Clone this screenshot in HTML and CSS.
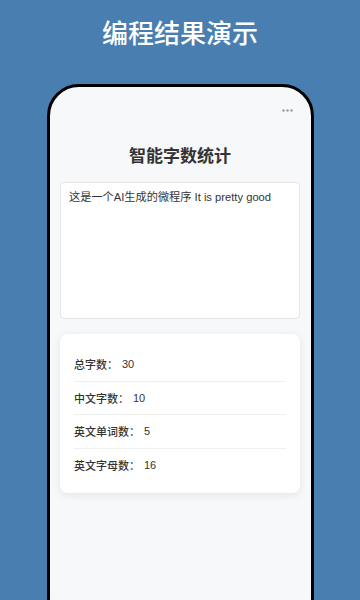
FILE: index.html
```html
<!DOCTYPE html>
<html lang="zh-CN">
<head>
  <meta charset="UTF-8">
  <meta name="viewport" content="width=device-width, initial-scale=1.0">
  <title>编程结果演示</title>
  <link rel="stylesheet" href="styles.css">
</head>
<body>
  <h1 class="banner">编程结果演示</h1>
  <div class="phone">
    <!-- Mini program nav bar -->
    <div class="nav">
      <svg class="dots" width="11" height="3" viewBox="0 0 11 3">
        <circle cx="1.5" cy="1.5" r="1.3" fill="#a0a0a0"/>
        <circle cx="5.5" cy="1.5" r="1.3" fill="#a0a0a0"/>
        <circle cx="9.5" cy="1.5" r="1.3" fill="#a0a0a0"/>
      </svg>
    </div>
    <h2 class="title">智能字数统计</h2>
    <textarea class="input">这是一个AI生成的微程序 It is pretty good</textarea>
    <!-- Result card -->
    <div class="card">
      <div class="row"><span class="label">总字数：</span><span class="value">30</span></div>
      <div class="row"><span class="label">中文字数：</span><span class="value">10</span></div>
      <div class="row"><span class="label">英文单词数：</span><span class="value">5</span></div>
      <div class="row"><span class="label">英文字母数：</span><span class="value">16</span></div>
    </div>
  </div>
</body>
</html>
```

FILE: styles.css
```css
html, body {
  height: 600px;
  overflow: hidden;
}
body {
  margin: 0;
  background-color: #487eb0;
  font-family: "Liberation Sans", "Noto Sans CJK SC", sans-serif;
}
.banner {
  margin: 0;
  padding-top: 17px;
  font-size: 26px;
  line-height: 30px;
  font-weight: 500;
  color: #fff;
  text-align: center;
  font-family: "Noto Sans CJK SC", sans-serif;
}
.phone {
  width: 241px;
  height: 540px;
  margin: 37px auto 0;
  padding: 0 10px;
  border: 3px solid #000;
  border-radius: 32px;
  background-color: #f7f8fa;
}
.nav {
  height: 46px;
  display: flex;
  justify-content: flex-end;
  align-items: center;
  padding-right: 8px;
}
.dots {
  display: block;
}
.title {
  margin: 10px 0 15px;
  font-size: 17px;
  line-height: 24px;
  font-weight: 600;
  color: #333;
  text-align: center;
  font-family: "Noto Sans CJK SC", sans-serif;
}
.input {
  display: block;
  box-sizing: border-box;
  width: 240px;
  height: 137px;
  margin: 0 auto 15px;
  padding: 6px 8px;
  border: 1px solid #e6e6e8;
  border-radius: 4px;
  background-color: #fff;
  color: #333;
  font-family: "Liberation Sans", "Noto Sans CJK SC", sans-serif;
  font-size: 11.2px;
  line-height: 16px;
  resize: none;
  outline: none;
}
.card {
  width: 212px;
  margin: 0 auto;
  padding: 14px 14px 12px;
  background-color: #fff;
  border-radius: 8px;
  box-shadow: 0 2px 8px rgba(0, 0, 0, 0.08);
}
.row {
  display: flex;
  align-items: center;
  height: 12.6px;
  padding: 10px 0;
  font-size: 11px;
  color: #333;
  border-bottom: 1px solid #f0f0f0;
}
.row:last-child {
  border-bottom: none;
}
.label {
  font-weight: 500;
  font-family: "Noto Sans CJK SC", sans-serif;
}
.value {
  margin-left: 4px;
}
```
